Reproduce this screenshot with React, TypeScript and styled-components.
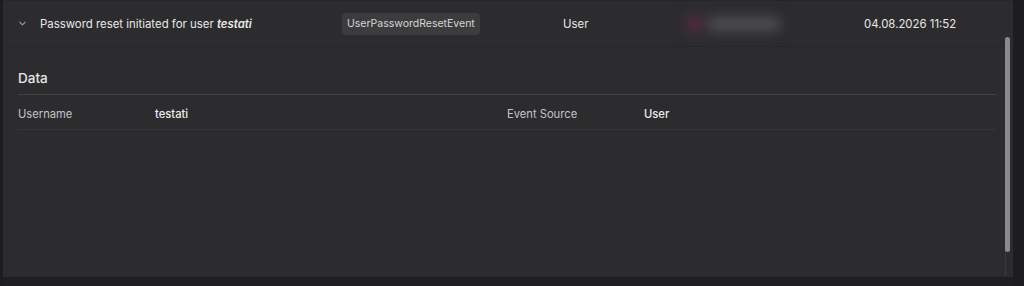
import React from 'react'
import styled, { createGlobalStyle } from 'styled-components'

const GlobalStyle = createGlobalStyle`
  html, body {
    margin: 0;
    padding: 0;
    background: #1c1c1e;
  }
  body {
    font-family: Inter, 'Noto Sans', sans-serif;
    color: #e6e6e6;
    -webkit-font-smoothing: antialiased;
  }
`

const Page = styled.div`
  width: 1024px;
  height: 286px;
  overflow: hidden;
  display: flex;
  flex-direction: column;
  padding: 0 11px 0 3px;
  box-sizing: border-box;
  background: #1d1d1f;
`

const Card = styled.div`
  position: relative;
  height: 276px;
  flex-shrink: 0;
  background: #2c2c2e;
  border-top: 1px solid #262628;
  box-sizing: border-box;
`

const Footer = styled.div`
  flex: 1;
  background: #1f1f21;
  border-top: 1px solid #2a2a2c;
`

const HeaderRow = styled.div`
  display: grid;
  grid-template-columns: 22px 302px 221px 117px 184px 1fr;
  align-items: center;
  height: 45px;
  padding-left: 15px;
  border-bottom: 1px solid #262628;
  font-size: 11.4px;
  color: #e8e8e8;
`

const Chevron = styled.span`
  display: flex;
  align-items: center;
  color: #9a9a9c;
`

const Title = styled.span`
  white-space: nowrap;
  em {
    font-weight: 600;
  }
`

const Badge = styled.span`
  justify-self: start;
  background: #3c3c3e;
  color: #d6d6d6;
  border-radius: 4px;
  padding: 4px 5px 5px;
  font-size: 10.5px;
  white-space: nowrap;
`

const Cell = styled.span`
  white-space: nowrap;
`

const Blurred = styled.div`
  display: flex;
  align-items: center;
  gap: 4px;
  margin-left: 4px;
  filter: blur(6px);
`

const Avatar = styled.span`
  width: 20px;
  height: 20px;
  border-radius: 50%;
  background: #4e2c40;
`

const HiddenText = styled.span`
  width: 72px;
  height: 16px;
  border-radius: 6px;
  background: #4c4c4e;
`

const Details = styled.div`
  padding: 21px 17px 0 15px;
`

const SectionTitle = styled.div`
  height: 27px;
  padding-top: 2px;
  box-sizing: border-box;
  font-size: 13.5px;
  font-weight: 500;
  color: #e8e8e8;
  border-bottom: 1px solid #434345;
`

const DataRow = styled.div`
  display: grid;
  grid-template-columns: 137px 352px 137px 1fr;
  align-items: center;
  height: 35px;
  box-sizing: border-box;
  padding-top: 3px;
  border-bottom: 1px solid #363638;
  font-size: 11.2px;
`

const Label = styled.span`
  color: #c4c4c6;
`

const Value = styled.span`
  color: #ececec;
  font-weight: 500;
`

const ScrollTrack = styled.div`
  position: absolute;
  right: 3px;
  top: 36px;
  bottom: 0;
  width: 5px;
  border-left: 1px solid #3a3a3c;
  box-sizing: border-box;
`

const ScrollThumb = styled.div`
  position: absolute;
  left: -1px;
  top: 0;
  width: 5px;
  height: 215px;
  border-radius: 3px;
  background: #8a8a8c;
`

export default function App() {
  return (
    <>
      <GlobalStyle />
      <Page>
        <Card>
          <HeaderRow>
            <Chevron>
              <svg width="9" height="9" viewBox="0 0 10 10" fill="none">
                <path d="M2 3.5 5 6.5 8 3.5" stroke="currentColor" strokeWidth="1.3" strokeLinecap="round" strokeLinejoin="round" />
              </svg>
            </Chevron>
            <Title>
              Password reset initiated for user <em>testati</em>
            </Title>
            <Badge>UserPasswordResetEvent</Badge>
            <Cell>User</Cell>
            <Blurred>
              <Avatar />
              <HiddenText />
            </Blurred>
            <Cell>04.08.2026 11:52</Cell>
          </HeaderRow>
          <Details>
            <SectionTitle>Data</SectionTitle>
            <DataRow>
              <Label>Username</Label>
              <Value>testati</Value>
              <Label>Event Source</Label>
              <Value>User</Value>
            </DataRow>
          </Details>
          <ScrollTrack>
            <ScrollThumb />
          </ScrollTrack>
        </Card>
        <Footer />
      </Page>
    </>
  )
}
